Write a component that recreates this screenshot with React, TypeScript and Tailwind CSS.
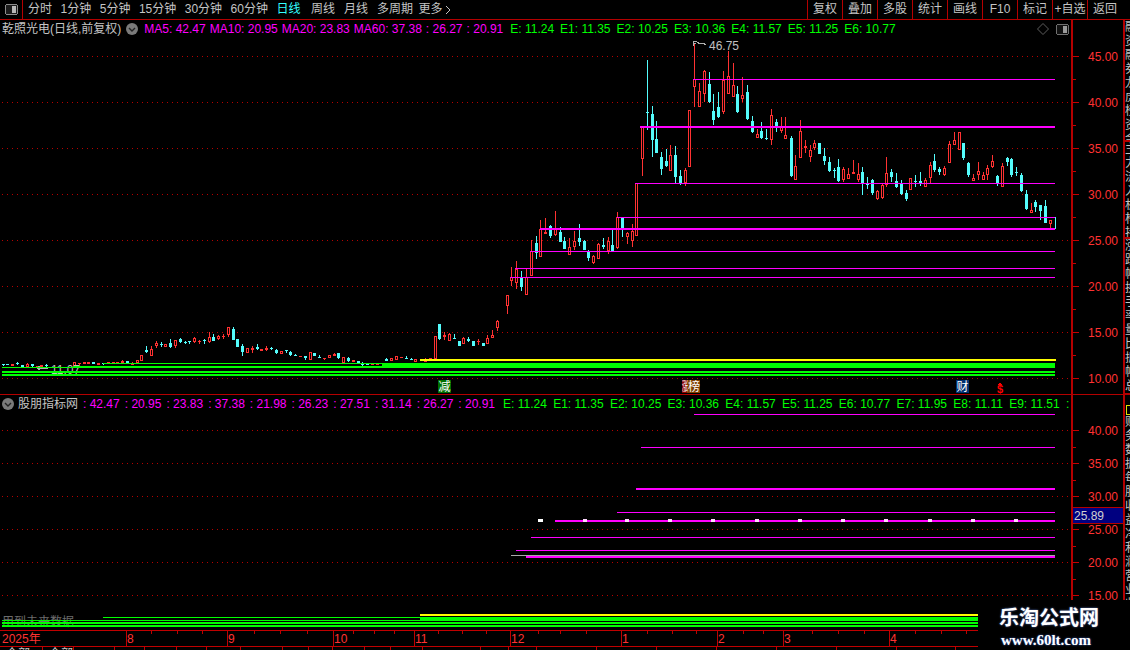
// K-line terminal screen: two chart panes, value axes, time axis, logo overlay
type Row = [number, number, number, number, number, number];

const RED = "#ff3232";
const CYAN = "#54fcfc";
const MAGENTA = "#ff00ff";
const GREEN = "#00ff00";
const YELLOW = "#ffff00";

// candle rows read from crops: [x, wickTop, wickBottom, bodyTop, bodyBottom, isRed], in 3x crop units
const scale = (ox: number, oy: number, rows: Row[]): Row[] =>
  rows.map(([x, wt, wb, bt, bb, up]) => [ox + x / 3, oy + wt / 3, oy + wb / 3, oy + bt / 3, oy + bb / 3, up]);

const candles: Row[] = [
  ...scale(0, 320, [
    [8, 132, 137, 132, 136, 0], [20, 133, 137, 133, 136, 0], [37, 132, 137, 132, 137, 1], [50, 127, 135, 129, 131, 0],
    [65, 135, 141, 135, 141, 0], [80, 130, 141, 132, 141, 1], [95, 132, 140, 132, 137, 0], [110, 138, 146, 138, 143, 1],
    [122, 136, 141, 136, 141, 1], [137, 132, 141, 136, 138, 0], [222, 127, 137, 127, 137, 1], [237, 129, 135, 129, 131, 1],
    [253, 127, 132, 127, 132, 1], [265, 127, 132, 127, 132, 1], [280, 127, 132, 127, 132, 0], [295, 129, 135, 129, 135, 1],
    [310, 130, 135, 130, 132, 0], [325, 127, 131, 127, 130, 1], [340, 127, 130, 127, 130, 1], [352, 125, 130, 126, 130, 1],
  ]),
  ...scale(120, 310, [
    [7, 150, 160, 152, 160, 1], [22, 153, 160, 153, 160, 0], [37, 157, 165, 160, 165, 1], [52, 150, 160, 150, 160, 1],
    [64, 136, 153, 136, 153, 1], [79, 108, 130, 120, 127, 0], [94, 108, 138, 118, 137, 1], [109, 94, 114, 99, 108, 1],
    [124, 96, 111, 102, 104, 0], [136, 102, 111, 102, 111, 1], [151, 87, 114, 98, 111, 0], [166, 90, 114, 91, 108, 1],
    [181, 84, 99, 87, 96, 0], [196, 93, 102, 96, 98, 0], [208, 93, 102, 94, 96, 0], [223, 81, 99, 84, 96, 1],
    [238, 90, 102, 93, 95, 1], [253, 87, 102, 90, 92, 0], [268, 66, 99, 81, 96, 1], [280, 72, 93, 81, 93, 0],
    [295, 75, 89, 79, 87, 1], [310, 72, 87, 79, 81, 1], [325, 51, 81, 51, 75, 1], [340, 51, 90, 57, 90, 0],
    [352, 87, 111, 87, 111, 0], [367, 102, 138, 108, 126, 0], [382, 114, 129, 114, 129, 1], [397, 108, 129, 114, 120, 1],
    [412, 102, 120, 111, 117, 0], [424, 117, 123, 117, 123, 1], [439, 108, 123, 114, 120, 1], [454, 111, 120, 114, 116, 0],
    [469, 117, 132, 120, 129, 0], [484, 123, 132, 123, 132, 1], [499, 120, 129, 120, 123, 0], [511, 123, 138, 126, 135, 0],
    [526, 132, 138, 134, 136, 0], [541, 138, 141, 138, 141, 1], [556, 138, 150, 138, 144, 0], [571, 126, 150, 126, 150, 1],
    [583, 129, 138, 129, 138, 0], [598, 135, 145, 141, 143, 0], [613, 144, 150, 144, 147, 1], [628, 135, 144, 135, 144, 1],
    [643, 129, 138, 132, 138, 1], [655, 129, 147, 129, 144, 0], [670, 141, 160, 141, 160, 1], [685, 141, 156, 144, 153, 0],
    [700, 150, 156, 150, 156, 1], [715, 153, 160, 153, 160, 0], [727, 156, 168, 161, 163, 0], [742, 160, 165, 160, 165, 0],
    [757, 161, 164, 161, 164, 1], [772, 161, 164, 161, 164, 1], [798, 144, 153, 147, 153, 0], [814, 144, 153, 144, 153, 1],
    [829, 138, 150, 138, 150, 1], [842, 141, 144, 141, 144, 1], [859, 138, 147, 144, 146, 0], [874, 144, 150, 147, 149, 0],
    [886, 147, 156, 147, 156, 1], [916, 145, 155, 147, 155, 1], [931, 144, 150, 144, 150, 1],
  ]),
  ...scale(0, 320, [
    [1306, 48, 117, 48, 117, 1], [1318, 12, 60, 12, 57, 0], [1333, 36, 60, 45, 52, 1], [1348, 40, 62, 42, 62, 1],
    [1363, 42, 57, 54, 56, 0], [1378, 64, 77, 64, 77, 0], [1390, 52, 74, 54, 71, 1], [1405, 52, 68, 57, 64, 0],
    [1420, 64, 77, 64, 77, 0], [1435, 57, 74, 64, 66, 1], [1450, 69, 78, 69, 78, 0], [1462, 45, 72, 54, 71, 1],
    [1477, 30, 55, 44, 53, 1], [1492, 0, 33, 3, 24, 1],
  ]),
  ...scale(500, 190, [
    [22, 315, 372, 316, 347, 1], [34, 232, 288, 262, 272, 1], [49, 213, 297, 236, 278, 1], [64, 243, 303, 263, 291, 0],
    [79, 238, 314, 262, 314, 1], [94, 150, 257, 184, 257, 1], [109, 138, 207, 159, 189, 0], [121, 90, 200, 118, 200, 1],
    [136, 84, 132, 126, 132, 1], [151, 105, 144, 108, 138, 0], [166, 63, 138, 114, 135, 1], [181, 111, 156, 126, 156, 0],
    [193, 141, 177, 153, 177, 0], [208, 144, 194, 171, 194, 1], [223, 123, 180, 153, 171, 1], [238, 102, 168, 144, 156, 0],
    [253, 150, 180, 153, 180, 0], [265, 180, 213, 186, 204, 0], [280, 195, 222, 198, 219, 1], [295, 159, 207, 162, 206, 1],
    [310, 144, 177, 165, 171, 0], [325, 141, 192, 153, 183, 1], [337, 120, 183, 165, 183, 0], [352, 66, 177, 81, 174, 1],
    [367, 84, 141, 84, 114, 0], [382, 126, 162, 130, 141, 1], [397, 102, 171, 123, 153, 1], [409, -21, 138, -21, 137, 1],
  ]),
  ...scale(620, 40, [
    [65, 260, 407, 260, 358, 1], [80, 60, 270, 216, 218, 0], [95, 198, 350, 222, 300, 0], [109, 243, 338, 297, 338, 0],
    [122, 336, 404, 351, 386, 0], [137, 327, 380, 363, 378, 0], [151, 316, 392, 346, 392, 1], [166, 318, 430, 345, 411, 0],
    [181, 390, 434, 408, 430, 0], [196, 384, 437, 391, 428, 1], [208, 211, 382, 211, 382, 1], [223, 10, 203, 118, 140, 1],
    [238, 130, 200, 153, 200, 1], [253, 90, 186, 93, 163, 1], [268, 96, 190, 132, 185, 0], [280, 162, 254, 213, 240, 0],
    [295, 156, 233, 201, 231, 0], [310, 94, 224, 120, 215, 1], [325, 33, 162, 109, 161, 1], [340, 69, 170, 136, 170, 1],
    [352, 138, 218, 163, 216, 0], [367, 111, 186, 166, 176, 1], [382, 136, 242, 156, 236, 0], [397, 228, 280, 243, 275, 0],
    [412, 268, 293, 283, 293, 1], [424, 247, 297, 273, 293, 0], [439, 267, 300, 294, 296, 0], [454, 207, 315, 226, 299, 1],
    [469, 237, 276, 246, 260, 0], [484, 231, 280, 257, 273, 1], [496, 232, 297, 286, 296, 1], [512, 288, 410, 294, 408, 0],
    [526, 345, 419, 379, 419, 1], [541, 240, 353, 274, 353, 1], [556, 300, 338, 318, 323, 1], [571, 315, 365, 331, 350, 1],
    [583, 300, 330, 310, 324, 1], [598, 309, 342, 309, 342, 0], [613, 324, 376, 348, 362, 0], [628, 351, 395, 366, 393, 0],
    [643, 384, 414, 389, 391, 0], [655, 357, 425, 381, 423, 0], [670, 381, 425, 388, 419, 1], [685, 384, 416, 402, 416, 1],
  ]),
  ...scale(850, 110, [
    [10, 150, 192, 186, 192, 1], [25, 159, 215, 192, 209, 1], [37, 171, 254, 186, 219, 0], [52, 200, 236, 223, 225, 0],
    [67, 208, 257, 210, 248, 0], [82, 240, 270, 244, 267, 1], [97, 222, 267, 226, 263, 1], [109, 141, 230, 190, 226, 1],
    [124, 178, 216, 186, 201, 0], [139, 189, 233, 213, 230, 0], [154, 210, 254, 222, 251, 0], [169, 240, 273, 249, 267, 0],
    [181, 205, 240, 205, 239, 1], [196, 195, 230, 213, 215, 0], [211, 186, 228, 213, 219, 0], [226, 205, 231, 211, 230, 1],
    [241, 156, 220, 166, 203, 1], [253, 132, 186, 153, 179, 0], [268, 170, 194, 177, 186, 0], [283, 167, 197, 175, 196, 1],
    [298, 94, 159, 103, 158, 1], [313, 66, 106, 90, 104, 1], [328, 67, 122, 67, 121, 1], [340, 99, 150, 99, 145, 0],
    [355, 156, 200, 159, 195, 0], [370, 192, 213, 204, 212, 1], [385, 156, 209, 183, 194, 1], [400, 186, 209, 195, 209, 1],
    [412, 165, 209, 174, 194, 1], [427, 135, 173, 153, 172, 1], [442, 195, 228, 198, 221, 0], [457, 159, 231, 168, 230, 1],
    [472, 141, 167, 144, 156, 0], [484, 144, 201, 147, 195, 0], [499, 171, 198, 185, 187, 0], [514, 189, 246, 195, 243, 0],
    [529, 240, 299, 252, 297, 0], [544, 279, 309, 300, 308, 1], [556, 270, 306, 276, 291, 0], [571, 285, 330, 285, 303, 0],
    [586, 270, 339, 288, 338, 0], [601, 330, 354, 331, 342, 1],
  ]),
];

// price lines: [y, left, thickness]
const mainLevels: [number, number, number][] = [
  [79, 693, 1], [126, 640, 2], [183, 635, 1], [217, 617, 1], [228, 540, 2], [251, 530, 1], [268, 515, 1], [277, 510, 1],
];
const subLevels: [number, number, number][] = [
  [414, 694, 1], [447, 641, 1], [488, 636, 2], [512, 617, 1], [520, 555, 2], [537, 531, 1], [550, 516, 1], [556, 526, 2],
];
const markers = [583, 625, 668, 711, 755, 798, 841, 884, 928, 971, 1014];

const mainValues = [
  [45, 56], [40, 102], [35, 148], [30, 194], [25, 240], [20, 286], [15, 332], [10, 378],
];
const subValues = [
  [40, 430], [35, 463], [30, 496], [25, 529], [20, 562], [15, 595],
];

const months = [
  ["2025年", 2, 0], ["8", 127, 1], ["9", 228, 1], ["10", 334, 1], ["11", 415, 1], ["12", 511, 1], ["1", 622, 1], ["2", 718, 1], ["3", 784, 1], ["4", 890, 1],
] as const;
const weekTicks = [151, 177, 202, 254, 280, 307, 353, 374, 394, 438, 462, 486, 538, 560, 586, 647, 672, 696, 743, 763, 812, 838, 864, 915, 941, 966];
const tabWidths = [43, 31, 41, 30, 32, 30, 34, 42, 26, 24, 32, 26, 32, 58, 28, 28, 60, 60, 60, 60, 60, 60, 59];
const stripGroups = [
  { rows: "融资融券龙虎榜资金净", h: "h-[122px]" },
  { rows: "主力流入机构持股", h: "h-[97px]" },
  { rows: "涨跌幅换手率量比振幅总市值流通", h: "h-[156px]" },
];

function Candles() {
  return (
    <>
      {candles.map(([x, wt, wb, bt, bb, up], i) => {
        const X = Math.round(x);
        const top = Math.round(bt);
        const h = Math.max(1, Math.round(bb) - top);
        const color = up ? RED : CYAN;
        return (
          <g key={i}>
            <rect x={X} y={Math.round(wt)} width={1} height={Math.max(1, Math.round(wb - wt))} fill={color} />
            <rect x={X - 1} y={top} width={3} height={h} fill={color} />
            {up && h >= 3 ? <rect x={X} y={top + 1} width={1} height={h - 2} fill="#000" /> : null}
          </g>
        );
      })}
    </>
  );
}

function Grid({ values }: { values: number[][] }) {
  return (
    <>
      {values.map(([v, y]) => (
        <line key={v} x1={2} x2={1071} y1={y + 0.5} y2={y + 0.5} stroke="#b80000" strokeDasharray="1 4" shapeRendering="geometricPrecision" />
      ))}
    </>
  );
}

function Levels({ rows }: { rows: [number, number, number][] }) {
  return (
    <>
      {rows.map(([y, left, t]) => (
        <rect key={y} x={left} y={y} width={1055 - left} height={t} fill={MAGENTA} />
      ))}
    </>
  );
}

function ValueAxis({ top, height, values, children }: { top: number; height: number; values: number[][]; children?: React.ReactNode }) {
  return (
    <svg width={50} height={height} viewBox={`0 ${top} 50 ${height}`} shapeRendering="crispEdges" className="block shrink-0 border-l-2 border-[#b40000] box-content">
      {values.map(([v, y]) => (
        <g key={v}>
          <rect x={0} y={y} width={6} height={1} fill="#c80000" />
          <rect x={0} y={y + (height > 300 ? 23 : 17)} width={3} height={1} fill="#c80000" />
          <text x={15} y={y + 5} fontSize={12} fill={RED}>{v}.00</text>
        </g>
      ))}
      {children}
    </svg>
  );
}

function RoundChevron() {
  return (
    <svg width={12} height={12} viewBox="0 0 12 12" className="shrink-0">
      <circle cx={6} cy={6} r={6} fill="#7a7a7a" />
      <path d="M3 5l3 3 3-3" fill="none" stroke="#222" strokeWidth={1.4} />
    </svg>
  );
}

function Values({ items, color }: { items: string[]; color: string }) {
  return (
    <>
      {items.map((t, i) => (
        <span key={i} style={{ color }} className="whitespace-nowrap">{t}</span>
      ))}
    </>
  );
}

function Toolbar() {
  const left = ["分时", "1分钟", "5分钟", "15分钟", "30分钟", "60分钟", "日线"];
  const rest = ["周线", "月线", "多周期"];
  const right = ["复权", "叠加", "多股", "统计", "画线", "F10", "标记", "+自选", "返回"];
  return (
    <div className="h-5 shrink-0 flex items-stretch border-b border-[#b40000] text-[12px] leading-[19px] text-[#c4c4c4]">
      <div className="w-[23px] flex items-center justify-center border-r border-[#b40000]">
        <svg width={13} height={11} viewBox="0 0 13 11" shapeRendering="crispEdges">
          <rect x={0.5} y={0.5} width={12} height={10} rx={2} fill="#1c1c1c" stroke="#8c8c8c" />
          <rect x={7} y={2} width={4} height={7} fill="#b8b8b8" />
        </svg>
      </div>
      <div className="flex gap-[8.5px] pl-[5px]">
        {left.map((t) => (
          <span key={t} className={t === "日线" ? "text-[#33ffff]" : ""}>{t}</span>
        ))}
        <div className="flex gap-[9px] ml-[2px]">
          {rest.map((t) => (
            <span key={t}>{t}</span>
          ))}
        </div>
        <span className="flex items-center gap-[2px] -ml-[3px]">
          更多
          <svg width={6} height={10} viewBox="0 0 6 10"><path d="M1 1l4 4-4 4" fill="none" stroke="#c4c4c4" /></svg>
        </span>
      </div>
      <div className="ml-auto flex mr-[8px]">
        {right.map((t) => (
          <span key={t} className="w-[35px] text-center border-l border-[#b40000]">{t}</span>
        ))}
      </div>
    </div>
  );
}

function MainPane() {
  return (
    <div className="h-[375px] shrink-0 flex border-b border-[#b40000] box-border">
      <div className="relative w-[1071px] h-[374px]">
        <svg width={1071} height={374} viewBox="0 20 1071 374" shapeRendering="crispEdges" className="absolute inset-0">
          <Grid values={mainValues} />
          <Candles />
          <rect x={1055} y={217} width={1} height={12} fill={CYAN} />
          <Levels rows={mainLevels} />
          {/* high marker */}
          <path d="M693 46V41h4M693 43h3M697 42l3 2 3-1 3 2" fill="none" stroke="#b0b0b0" />
          <text x={709} y={50} fontSize={12} fill="#c0c0c0">46.75</text>
          {/* low marker, sits under the green bands */}
          <path d="M37 368h11M37 368l3-2M37 368l3 2" fill="none" stroke="#b0b0b0" />
          <text x={51} y={374} fontSize={12} fill="#c0c0c0">11.07</text>
          <rect x={2} y={367} width={71} height={1} fill={GREEN} />
          <rect x={73} y={366} width={982} height={2} fill={GREEN} />
          <rect x={103} y={363} width={279} height={1} fill={GREEN} />
          <rect x={382} y={363} width={673} height={5} fill={GREEN} />
          <rect x={2} y={371} width={1053} height={2} fill={GREEN} />
          <rect x={2} y={374} width={1053} height={2} fill={GREEN} />
          <rect x={420} y={359} width={636} height={2} fill={YELLOW} />
          {/* event tags */}
          <rect x={438} y={380} width={13} height={13} fill="#007000" />
          <text x={438.5} y={391} fontSize={12} fill="#fff">减</text>
          <rect x={682} y={380} width={7} height={13} fill="#8c0000" />
          <rect x={687} y={380} width={13} height={13} fill="#804000" />
          <text x={682} y={391} fontSize={12} fill="#fff" textLength={6} lengthAdjust="spacingAndGlyphs">涨</text>
          <text x={688} y={391} fontSize={12} fill="#fff">榜</text>
          <rect x={956} y={380} width={13} height={13} fill="#003070" />
          <text x={956.5} y={391} fontSize={12} fill="#fff">财</text>
          <path d="M998 385l2-3 2 3z" fill="#ff0000" />
          <text x={997} y={393} fontSize={11} fontWeight={700} fill="#ff0000">$</text>
        </svg>
        <div className="relative h-[18px] flex items-center pl-[2px] text-[12px] text-[#c4c4c4]">
          <span className="whitespace-nowrap">乾照光电(日线,前复权)</span>
          <span className="mx-[5px]"><RoundChevron /></span>
          <div className="flex gap-[4px] ml-[1px]">
            <Values color={MAGENTA} items={["MA5: 42.47", "MA10: 20.95", "MA20: 23.83", "MA60: 37.38", ": 26.27", ": 20.91"]} />
          </div>
          <div className="flex gap-[6px] ml-[7px]">
            <Values color={GREEN} items={["E: 11.24", "E1: 11.35", "E2: 10.25", "E3: 10.36", "E4: 11.57", "E5: 11.25", "E6: 10.77"]} />
          </div>
          <div className="ml-auto flex items-center gap-[7px] pr-[2px]">
            <svg width={12} height={12} viewBox="0 0 12 12"><path d="M6 .5L11.5 6 6 11.5.5 6z" fill="none" stroke="#5c5c5c" /></svg>
            <svg width={13} height={11} viewBox="0 0 13 11" shapeRendering="crispEdges">
              <rect x={0.5} y={0.5} width={12} height={10} rx={2} fill="#111" stroke="#707070" />
              <rect x={7} y={2} width={4} height={7} fill="#9a9a9a" />
            </svg>
          </div>
        </div>
      </div>
      <ValueAxis top={20} height={374} values={mainValues} />
    </div>
  );
}

function SubPane() {
  return (
    <div className="h-[235px] shrink-0 flex">
      <div className="relative w-[1071px] h-[235px]">
        <svg width={1071} height={235} viewBox="0 395 1071 235" shapeRendering="crispEdges" className="absolute inset-0">
          <Grid values={subValues} />
          <Levels rows={subLevels} />
          <rect x={511} y={555} width={544} height={1} fill="#a8a8a8" />
          <rect x={538} y={519} width={5} height={3} fill="#fff" />
          {markers.map((x) => (
            <rect key={x} x={x} y={519} width={4} height={3} fill="#ffd8ff" />
          ))}
          <text x={2} y={626} fontSize={12} fill="#6c6c6c">用到未来数据</text>
          <rect x={103} y={617} width={317} height={1} fill={GREEN} />
          <rect x={420} y={617} width={635} height={3} fill={GREEN} />
          <rect x={2} y={620} width={1053} height={1} fill={GREEN} />
          <rect x={2} y={622} width={1053} height={2} fill={GREEN} />
          <rect x={2} y={625} width={1053} height={2} fill={GREEN} />
          <rect x={420} y={614} width={635} height={2} fill={YELLOW} />
        </svg>
        <div className="relative h-[18px] flex items-center pl-[2px] text-[12px] text-[#c4c4c4]">
          <RoundChevron />
          <span className="ml-[4px] mr-[5px] whitespace-nowrap">股朋指标网</span>
          <div className="flex gap-[5px]">
            <Values color={MAGENTA} items={[": 42.47", ": 20.95", ": 23.83", ": 37.38", ": 21.98", ": 26.23", ": 27.51", ": 31.14", ": 26.27", ": 20.91"]} />
          </div>
          <div className="flex gap-[6.3px] ml-[8px]">
            <Values color={GREEN} items={["E: 11.24", "E1: 11.35", "E2: 10.25", "E3: 10.36", "E4: 11.57", "E5: 11.25", "E6: 10.77", "E7: 11.95", "E8: 11.11", "E9: 11.51", ":"]} />
          </div>
        </div>
      </div>
      <ValueAxis top={395} height={235} values={subValues}>
        <rect x={0} y={507} width={50} height={16} fill="#000080" />
        <rect x={0} y={507} width={50} height={1} fill="#b40000" />
        <rect x={0} y={523} width={50} height={1} fill="#b40000" />
        <text x={1} y={520} fontSize={12} fill="#d0d0d0">25.89</text>
      </ValueAxis>
    </div>
  );
}

function TimeAxis() {
  return (
    <svg width={1123} height={15} viewBox="0 631 1123 15" shapeRendering="crispEdges" className="block shrink-0 border-t border-b border-[#c00000] box-content">
      {weekTicks.map((x) => (
        <rect key={x} x={x} y={631} width={1} height={3} fill="#c00000" />
      ))}
      {months.map(([label, x, tick]) => (
        <g key={label}>
          {tick ? <rect x={x - 1} y={631} width={1} height={15} fill="#c00000" /> : null}
          <text x={x} y={643} fontSize={12} fill={RED}>{label}</text>
        </g>
      ))}
    </svg>
  );
}

export default function App() {
  return (
    <div className="relative w-[1130px] h-[650px] overflow-hidden bg-black flex flex-col [font-family:'Liberation_Sans','Noto_Sans_CJK_SC',sans-serif]">
      <Toolbar />
      <div className="flex flex-1 min-h-0">
        <div className="w-[1123px] shrink-0 flex flex-col">
          <MainPane />
          <SubPane />
          <TimeAxis />
          <div className="flex h-[3px] shrink-0 overflow-hidden text-[12px] leading-[12px] text-[#c4c4c4]">
            {tabWidths.map((w, i) => (
              <span key={i} style={{ width: w }} className="border-r border-[#c00000] pt-[1px] pl-[6px] shrink-0">
                {i < 2 ? "全部" : ""}
              </span>
            ))}
          </div>
        </div>
        <div className="flex-1 border-l-2 border-[#b40000] overflow-hidden text-[12px] leading-[14px] text-[#c4c4c4]">
          {stripGroups.map((g) => (
            <div key={g.rows} className={`${g.h} border-b-2 border-[#b40000] w-[12px] overflow-hidden`}>
              {g.rows.split("").map((c, i) => (
                <div key={i}>{c}</div>
              ))}
            </div>
          ))}
          <div className="w-[12px] h-[255px] overflow-hidden">
            <div className="mt-[10px] ml-[1px] w-[12px] h-[10px] border border-[#e0e000]" />
            {"财务数据每股收益净利润营业收入".split("").map((c, i) => (
              <div key={i}>{c}</div>
            ))}
          </div>
        </div>
      </div>
      {/* watermark logo sits over the bottom right corner */}
      <div className="absolute right-0 bottom-0 w-[152px] h-[50px] bg-black pl-[21px] text-white">
        <div className="text-[20px] leading-[24px] font-bold mt-[6px] [text-shadow:0_0_2px_#6080d0]">乐淘公式网</div>
        <div className="text-[15px] leading-[16px] font-bold pl-[2px] mt-[2px] [font-family:'Liberation_Serif',serif] [text-shadow:0_0_2px_#4070e0]">www.60lt.com</div>
      </div>
    </div>
  );
}
